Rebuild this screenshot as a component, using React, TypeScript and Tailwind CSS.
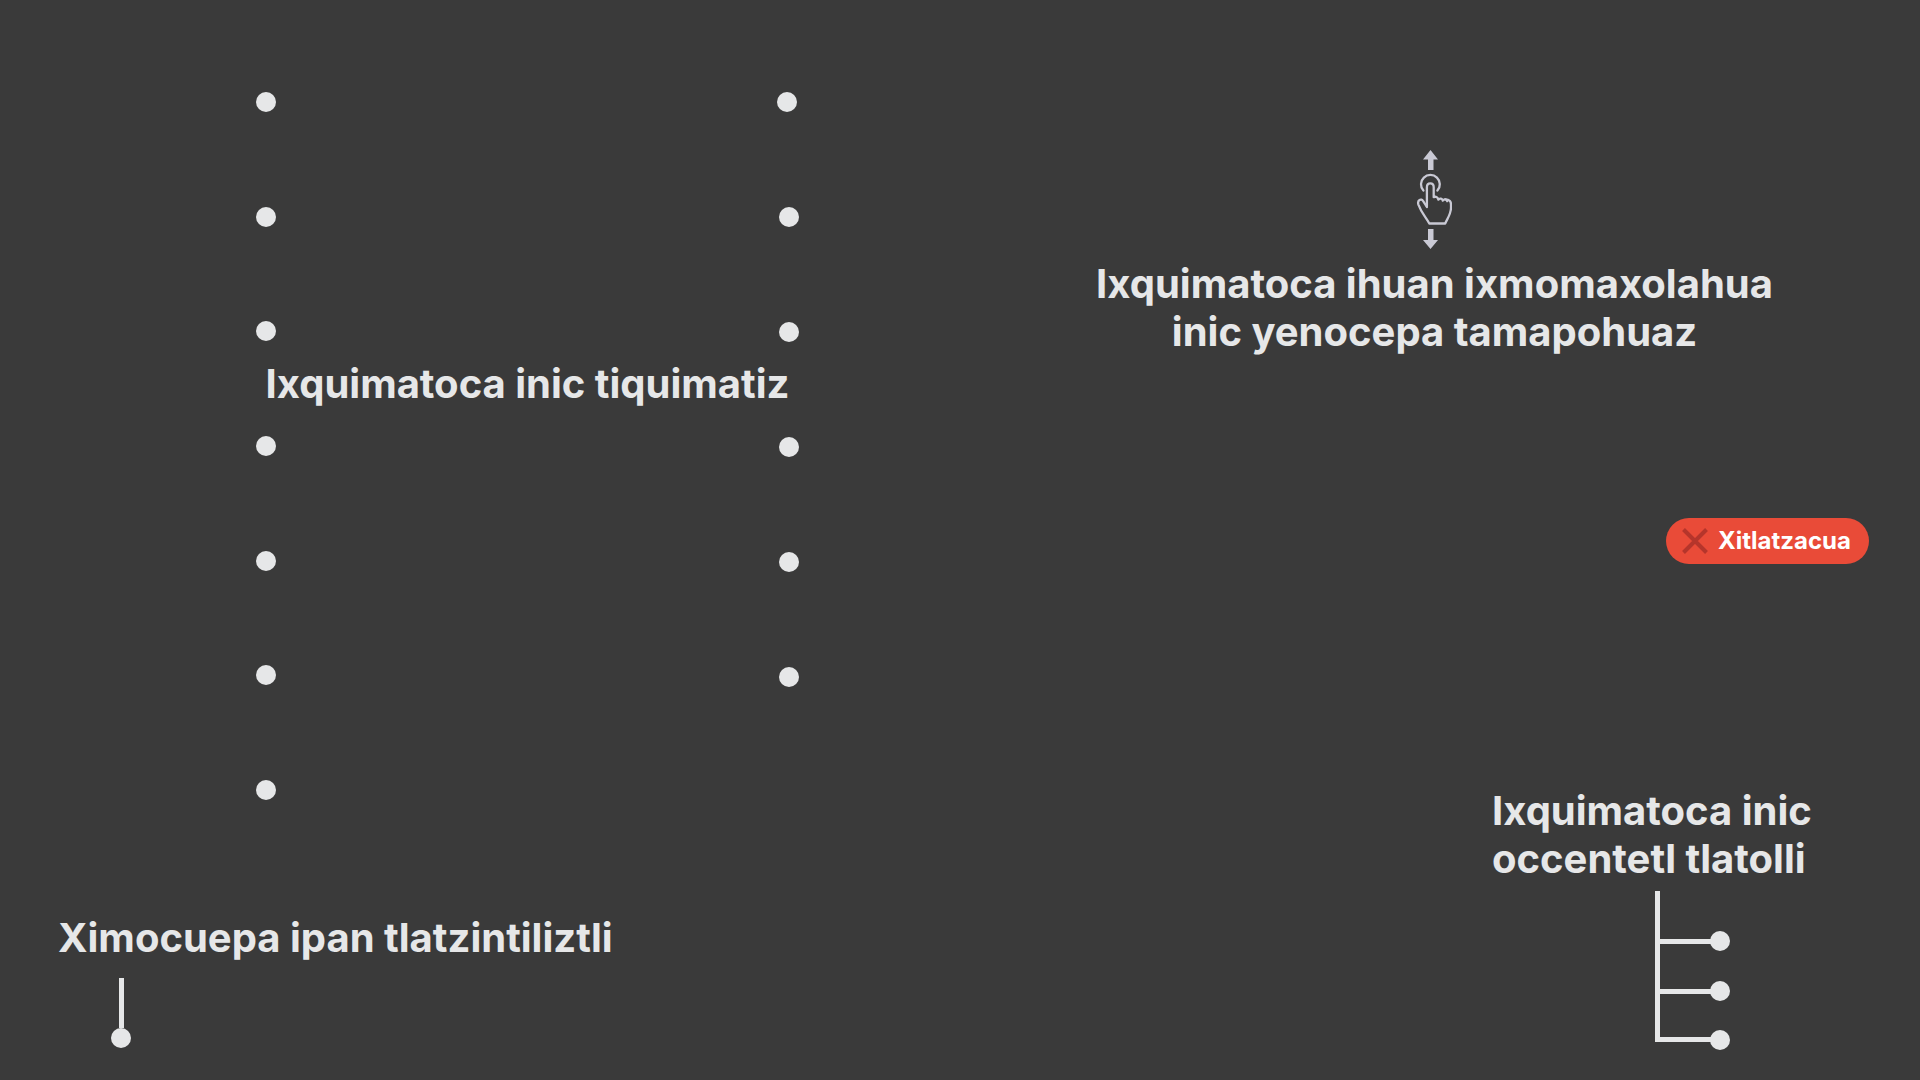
const startDots = [0, 1, 2, 3, 4, 5, 6];
const endDots = [0, 1, 2, 3, 4, 5];

function Dot() {
  return <span className="block size-5 rounded-full bg-[#e6e7e8]" />;
}

function SwipeIcon() {
  return (
    <svg
      aria-hidden="true"
      className="mr-0.5 h-[100px] w-9"
      viewBox="26 20 36 100"
      fill="none"
      stroke="#c9c9d4"
      strokeWidth="2.3"
      strokeLinecap="round"
      strokeLinejoin="round"
    >
      <path d="M40.5 20 48 29.5H43.5V40H38V29.5H33Z" fill="#c9c9d4" stroke="none" />
      <path d="M40.5 119 48 110H43.5V99H38V110H33Z" fill="#c9c9d4" stroke="none" />
      <path d="M33.4 60.6A9.4 9.4 0 1 1 47.4 60.6" />
      <path d="M36.9 76.5V57.2C36.9 52 43.7 52 43.7 57.2V67.2C45.4 66.2 48 67 48.3 69.7C49.8 67.8 52.3 68.6 52.8 70.6C54.2 68.7 56.6 69 57.2 71.2" />
      <path d="M55.2 69.3C59.5 69.2 61 71.6 61 74.4V78C60.8 84.5 57.6 88 55.2 93.5H39.3C35.5 86.5 31.5 83 28.4 74.6C27 70.2 31.3 67.8 33.2 71.2L36.9 77" />
    </svg>
  );
}

function LanguageTree() {
  return (
    <svg
      aria-hidden="true"
      className="mt-2 ml-[163px] h-[159px] w-[75px]"
      viewBox="0 0 75 159"
      fill="#e6e7e8"
    >
      <path d="M0 0H5V48H65V53H5V98H65V103H5V146H65V151H0Z" />
      <circle cx="65" cy="50" r="10" />
      <circle cx="65" cy="100" r="10" />
      <circle cx="65" cy="149" r="10" />
    </svg>
  );
}

export default function App() {
  return (
    <main className="grid min-h-screen grid-cols-2 bg-[#3a3a3a] font-['Inter',sans-serif] text-[40px] leading-12 font-bold text-[#e6e7e8]">
      <section className="flex flex-col pt-[92px] pb-8">
        <div className="ml-64 grid w-[543px] grid-cols-1">
          <ul className="col-start-1 row-start-1 flex h-[708px] flex-col justify-between justify-self-start">
            {startDots.map((n) => (
              <li key={n}>
                <Dot />
              </li>
            ))}
          </ul>
          <ul className="col-start-1 row-start-1 flex flex-col gap-[95px] justify-self-end">
            {endDots.map((n) => (
              <li key={n} className="first:-ml-0.5">
                <Dot />
              </li>
            ))}
          </ul>
          <h1 className="col-start-1 row-start-1 mt-[268px] self-start text-center whitespace-nowrap">
            Ixquimatoca inic tiquimatiz
          </h1>
        </div>

        <div className="mt-auto ml-[58px]">
          <p>
            <a href="#home">Ximocuepa ipan tlatzintiliztli</a>
          </p>
          <div className="mt-4 ml-[53px] flex w-5 flex-col items-center">
            <span className="h-[50px] w-[5px] bg-[#e6e7e8]" />
            <Dot />
          </div>
        </div>
      </section>

      <section className="flex flex-col pt-[150px] pb-[30px]">
        <div className="ml-[138px] flex w-[673px] flex-col items-center text-center">
          <SwipeIcon />
          <p className="mt-2.5 whitespace-nowrap">
            Ixquimatoca ihuan ixmomaxolahua
            <br />
            inic yenocepa tamapohuaz
          </p>
        </div>

        <button
          type="button"
          className="mt-[162px] mr-[51px] flex h-[46px] w-[203px] items-center gap-2.5 self-end rounded-full bg-[#e94b38] pl-4 text-[24px] leading-7 whitespace-nowrap text-white"
        >
          <svg
            aria-hidden="true"
            className="size-[26px] shrink-0"
            viewBox="0 0 26 26"
            stroke="#b5352b"
            strokeWidth="4"
          >
            <path d="M1.5 1.5 24.5 24.5M24.5 1.5 1.5 24.5" />
          </svg>
          Xitlatzacua
        </button>

        <div className="mt-auto mr-[91px] w-[337px] self-end">
          <p className="whitespace-nowrap">
            <a href="#language">
              Ixquimatoca inic
              <br />
              occentetl tlatolli
            </a>
          </p>
          <LanguageTree />
        </div>
      </section>
    </main>
  );
}
